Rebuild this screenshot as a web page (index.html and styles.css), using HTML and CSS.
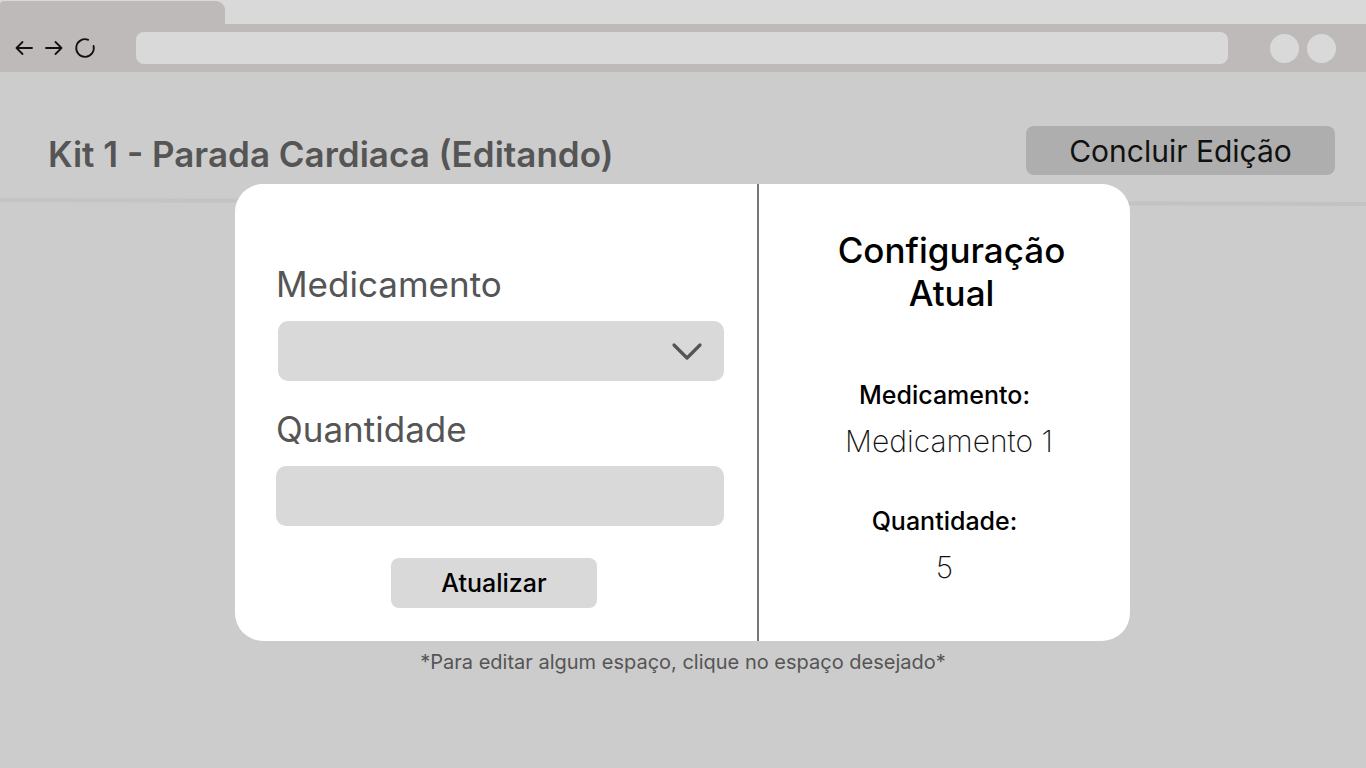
FILE: index.html
```html
<!DOCTYPE html>
<html lang="pt">
<head>
<meta charset="utf-8">
<title>Kit 1 - Parada Cardiaca (Editando)</title>
<link rel="stylesheet" href="styles.css">
</head>
<body>
<div class="browser">
  <div class="tabstrip">
    <div class="tab"></div>
  </div>
  <div class="toolbar">
    <div class="nav">
      <svg class="nav-icon" width="20" height="20" viewBox="0 0 20 20"><path d="M18 10H2.5M8.5 4L2.5 10L8.5 16" fill="none" stroke="#111" stroke-width="1.8" stroke-linecap="round" stroke-linejoin="round"/></svg>
      <svg class="nav-icon" width="20" height="20" viewBox="0 0 20 20"><path d="M2 10H17.5M11.5 4L17.5 10L11.5 16" fill="none" stroke="#111" stroke-width="1.8" stroke-linecap="round" stroke-linejoin="round"/></svg>
      <svg class="nav-icon" width="22" height="22" viewBox="0 0 22 22"><path d="M14.2 2.8A8.8 8.8 0 1 0 19.6 9" fill="none" stroke="#111" stroke-width="1.8" stroke-linecap="round"/></svg>
    </div>
    <div class="address"></div>
    <div class="dots"><span class="dot"></span><span class="dot"></span></div>
  </div>
</div>
<main class="page">
  <header class="page-header">
    <h1 class="page-title">Kit 1 - Parada Cardiaca (Editando)</h1>
    <button class="btn-finish">Concluir Edição</button>
  </header>
  <div class="header-rule"></div>

  <section class="modal">
    <div class="modal-left">
      <label class="field-label">Medicamento</label>
      <div class="select">
        <svg width="32" height="20" viewBox="0 0 32 20"><path d="M3 3L16 16L29 3" fill="none" stroke="#555" stroke-width="3.2" stroke-linecap="round" stroke-linejoin="round"/></svg>
      </div>
      <label class="field-label field-label-2">Quantidade</label>
      <div class="input"></div>
      <button class="btn-update">Atualizar</button>
    </div>
    <div class="modal-right">
      <h2 class="config-title">Configuração<br>Atual</h2>
      <div class="config-key">Medicamento:</div>
      <div class="config-value config-value-name">Medicamento 1</div>
      <div class="config-key config-key-2">Quantidade:</div>
      <div class="config-value">5</div>
    </div>
  </section>

  <p class="hint">*Para editar algum espaço, clique no espaço desejado*</p>
</main>
</body>
</html>
```

FILE: styles.css
```css
* { box-sizing: border-box; }

html, body {
  margin: 0;
  padding: 0;
  height: 100%;
}

body {
  background: #cccccc;
  font-family: Inter, "Noto Sans", "Liberation Sans", sans-serif;
  overflow: hidden;
}

/* browser chrome */
.tabstrip {
  height: 24px;
  background: #d9d9d9;
  display: flex;
  align-items: flex-end;
}

.tab {
  width: 225px;
  height: 23px;
  background: #bfbaba;
  border-radius: 4px 9px 0 0;
}

.toolbar {
  height: 48px;
  background: #bfbaba;
  display: flex;
  align-items: center;
}

.nav {
  display: flex;
  align-items: center;
  gap: 10px;
  padding-left: 14px;
  width: 136px;
}

.nav-icon { display: block; }

.address {
  flex: 0 0 1092px;
  height: 32px;
  background: #d9d9d9;
  border-radius: 8px;
}

.dots {
  display: flex;
  gap: 8px;
  margin-left: 42px;
}

.dot {
  width: 29px;
  height: 29px;
  border-radius: 50%;
  background: #d9d9d9;
}

/* page */
.page {
  position: relative;
  height: 696px;
}

.page-header {
  display: flex;
  justify-content: space-between;
  align-items: flex-start;
  padding: 54px 31px 0 48px;
}

.page-title {
  margin: 6px 0 0;
  font-size: 35px;
  line-height: 44px;
  font-weight: 600;
  color: #555555;
}

.btn-finish {
  width: 309px;
  height: 49px;
  border: none;
  border-radius: 8px;
  background: #aeaeae;
  color: #111111;
  font-family: inherit;
  font-size: 30px;
  font-weight: 400;
  padding: 0;
}

.header-rule {
  margin-top: 24px;
  height: 4px;
  background: #c3c3c3;
  transform: rotate(0.17deg);
}

/* modal */
.modal {
  position: absolute;
  left: 235px;
  top: 112px;
  width: 895px;
  height: 457px;
  background: #ffffff;
  border-radius: 28px;
  display: flex;
}

.modal-left {
  width: 524px;
  border-right: 2px solid #777777;
  padding: 79px 33px 0 41px;
  display: flex;
  flex-direction: column;
}

.field-label {
  font-size: 35px;
  line-height: 42px;
  font-weight: 400;
  color: #555555;
}

.field-label-2 { margin-top: 27px; }

.select {
  margin-top: 16px;
  margin-left: 2px;
  height: 60px;
  background: #d9d9d9;
  border-radius: 10px;
  display: flex;
  align-items: center;
  justify-content: flex-end;
  padding-right: 21px;
}

.select svg { display: block; margin-top: 2px; }

.input {
  margin-top: 16px;
  height: 60px;
  background: #d9d9d9;
  border-radius: 10px;
}

.btn-update {
  align-self: center;
  margin: 32px 12px 0 0;
  width: 206px;
  height: 50px;
  border: none;
  border-radius: 8px;
  background: #d9d9d9;
  color: #000000;
  font-family: inherit;
  font-size: 25px;
  font-weight: 500;
  padding: 0;
}

.modal-right {
  flex: 1;
  display: flex;
  flex-direction: column;
  align-items: center;
  padding-top: 45px;
  text-align: center;
}

.config-title {
  margin: 0;
  padding-left: 14px;
  font-size: 35px;
  line-height: 43px;
  font-weight: 500;
  color: #000000;
}

.config-key {
  margin-top: 65px;
  font-size: 25px;
  line-height: 30px;
  font-weight: 500;
  color: #000000;
}

.config-key-2 { margin-top: 47px; }

.config-value {
  margin-top: 13px;
  font-size: 30px;
  line-height: 36px;
  font-weight: 200;
  color: #111111;
}

.config-value-name { padding-left: 9px; }

.hint {
  position: absolute;
  left: 0;
  right: 0;
  top: 578px;
  margin: 0;
  text-align: center;
  font-size: 20px;
  line-height: 24px;
  color: #555555;
}
```
